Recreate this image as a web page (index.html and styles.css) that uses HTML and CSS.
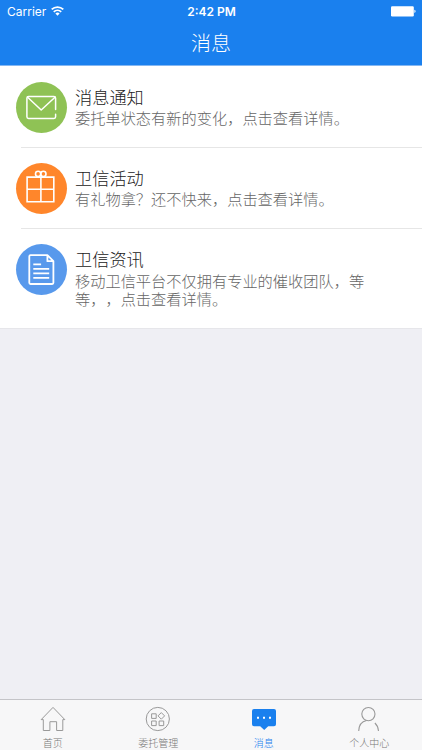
FILE: index.html
```html
<!DOCTYPE html>
<html lang="zh-CN">
<head>
  <meta charset="UTF-8" />
  <meta name="viewport" content="width=device-width, initial-scale=1.0" />
  <title>消息</title>
  <link rel="stylesheet" href="styles.css">
</head>
<body>

  <header class="header">
    <div class="status-bar">
      <div class="carrier">
        <span>Carrier</span>
        <svg width="13" height="10" viewBox="0 0 13 10" fill="none" stroke="#fff" stroke-width="1.8">
          <path d="M.7 3.4a8.3 8.3 0 0 1 11.6 0" />
          <path d="M2.8 5.8a5.3 5.3 0 0 1 7.4 0" />
          <path d="M6.5 9.7 4.4 7.6a3 3 0 0 1 4.2 0z" fill="#fff" stroke="none" />
        </svg>
      </div>
      <div class="time">2:42 PM</div>
      <div class="battery">
        <svg width="25" height="11" viewBox="0 0 25 11" fill="#fff">
          <rect x="0" y=".3" width="22.8" height="10.2" rx="1.2" />
          <path d="M23.4 3.8c1.6.3 1.6 2.9 0 3.2z" />
        </svg>
      </div>
    </div>
    <h1>消息</h1>
  </header>

  <main class="message-list">
    <div class="message">
      <div class="icon green">
        <svg width="51" height="51" viewBox="0 0 51 51" fill="none" stroke="#fff" stroke-width="1.5" stroke-linecap="round" stroke-linejoin="round">
          <path d="M39.6 27.5V16.2q0-1.7-1.7-1.7H12.6q-1.7 0-1.7 1.7v18.6q0 1.7 1.7 1.7h25.3q1.7 0 1.7-1.7v-2.5" />
          <path d="M11.6 15.2 25.2 28l13.8-12.8" />
        </svg>
      </div>
      <div class="text">
        <h2>消息通知</h2>
        <p>委托单状态有新的变化，点击查看详情。</p>
      </div>
    </div>

    <div class="message">
      <div class="icon orange">
        <svg width="51" height="51" viewBox="0 0 51 51" fill="none" stroke="#fff" stroke-width="1.6">
          <path d="M11.1 14.1h26.7v24.7H11.1zM11.1 26.2h26.7M24.9 14.1v24.7" />
          <circle cx="22.1" cy="10.9" r="2.6" />
          <circle cx="27.4" cy="10.9" r="2.6" />
        </svg>
      </div>
      <div class="text">
        <h2>卫信活动</h2>
        <p>有礼物拿？还不快来，点击查看详情。</p>
      </div>
    </div>

    <div class="message">
      <div class="icon blue">
        <svg width="51" height="51" viewBox="0 0 51 51" fill="none" stroke="#fff" stroke-width="1.8" stroke-linejoin="round">
          <path d="M31.4 11.2H14.5q-1.2 0-1.2 1.2v26.4q0 1.2 1.2 1.2h21.7q1.2 0 1.2-1.2V17.2zv6h6" />
          <path d="M17.3 20.3h7.8M17.3 24.8h15.9M17.3 29.3h15.9M17.3 33.8h15.9" />
        </svg>
      </div>
      <div class="text">
        <h2>卫信资讯</h2>
        <p>移动卫信平台不仅拥有专业的催收团队，等等，，点击查看详情。</p>
      </div>
    </div>
  </main>

  <nav class="tab-bar">
    <a class="tab">
      <svg width="26" height="26" viewBox="0 0 26 26" fill="none" stroke="#999" stroke-width="1">
        <path d="M1.2 13.6 13 1.4l11.8 12.2h-2v10.9h-6.2v-8.8H9.9v8.8H3.3V13.6z" />
      </svg>
      <span>首页</span>
    </a>
    <a class="tab">
      <svg width="26" height="26" viewBox="0 0 26 26" fill="none" stroke="#999" stroke-width="1">
        <circle cx="12.8" cy="13" r="11.6" />
        <path d="M6.6 7.8h4.6v4.6H6.6zM6.6 15h4.6v4.6H6.6zM14.1 15h4.6v4.6h-4.6zM16.3 6.6l3.3 3.3-3.3 3.3L13 9.9z" />
      </svg>
      <span>委托管理</span>
    </a>
    <a class="tab active">
      <svg width="26" height="26" viewBox="0 0 26 26">
        <path d="M3 2.9h20q2 0 2 2v13.3q0 2-2 2h-5.8L13.2 24l-4-3.8H3q-2 0-2-2V4.9q0-2 2-2z" fill="#1a80ee" />
        <path d="M6 10.8h2v2H6zM12 10.8h2v2h-2zM18 10.8h2v2h-2z" fill="#fff" />
      </svg>
      <span>消息</span>
    </a>
    <a class="tab">
      <svg width="26" height="26" viewBox="0 0 26 26" fill="none" stroke="#999" stroke-width="1.1">
        <circle cx="12.4" cy="8.1" r="6.6" />
        <path d="M2.7 25C2.9 19.4 6 15.4 10.5 14.5M18.9 17c2.1 1.9 3.3 4.6 3.6 8" />
      </svg>
      <span>个人中心</span>
    </a>
  </nav>

</body>
</html>
```

FILE: styles.css
```css
* {
  box-sizing: border-box;
}
body {
  margin: 0;
  height: 750px;
  display: flex;
  flex-direction: column;
  background: #efeff4;
  font-family: "Noto Sans CJK SC", sans-serif;
  font-weight: 300;
  text-spacing-trim: space-all;
}
h1, h2, p {
  margin: 0;
  font-weight: 300;
}
svg {
  display: block;
}
.header {
  height: 66px;
  background: #1a80ee;
  border-bottom: 1px solid #84b7f2;
  color: #fff;
}
.status-bar {
  display: grid;
  grid-template-columns: 1fr auto 1fr;
  align-items: center;
  height: 22px;
  padding: 0 6px 0 7px;
  font-family: Inter, sans-serif;
  font-size: 12px;
}
.carrier {
  display: flex;
  align-items: center;
  gap: 5px;
  font-weight: 400;
}
.time {
  font-weight: 600;
}
.battery {
  justify-self: end;
}
.header h1 {
  font-size: 20px;
  line-height: 42px;
  text-align: center;
}
.message-list {
  background: #fff;
  border-bottom: 1px solid #e6e6ea;
  padding-left: 15.5px;
}
.message {
  display: flex;
  gap: 8.5px;
  height: 81px;
  padding-top: 16px;
  position: relative;
}
.message:last-child {
  height: 100px;
}
/* divider is inset past the left edge of the icon */
.message:not(:last-child)::after {
  content: "";
  position: absolute;
  left: 5px;
  right: 0;
  bottom: -1px;
  height: 1px;
  background: #e6e6e6;
}
.icon {
  width: 51px;
  height: 51px;
  border-radius: 50%;
  flex: none;
}
.green {
  background: #8fc255;
}
.orange {
  background: #ff862b;
}
.blue {
  background: #5899ec;
}
.text {
  padding-top: 4px;
  width: 296px;
}
.text h2 {
  font-size: 17.2px;
  line-height: 22px;
  color: #222;
}
.text p {
  font-size: 15.23px;
  line-height: 18px;
  color: #666;
}
.message:last-child p {
  margin-top: 1px;
}
.tab-bar {
  display: flex;
  height: 51px;
  margin-top: auto;
  background: #f7f7f8;
  border-top: 1px solid #c4c4c8;
}
.tab {
  flex: 1;
  display: flex;
  flex-direction: column;
  align-items: center;
  padding-top: 6px;
  color: #777;
  font-size: 10px;
  line-height: 14px;
}
.tab span {
  margin-top: 4px;
}
.active {
  color: #1a80ee;
}
```
